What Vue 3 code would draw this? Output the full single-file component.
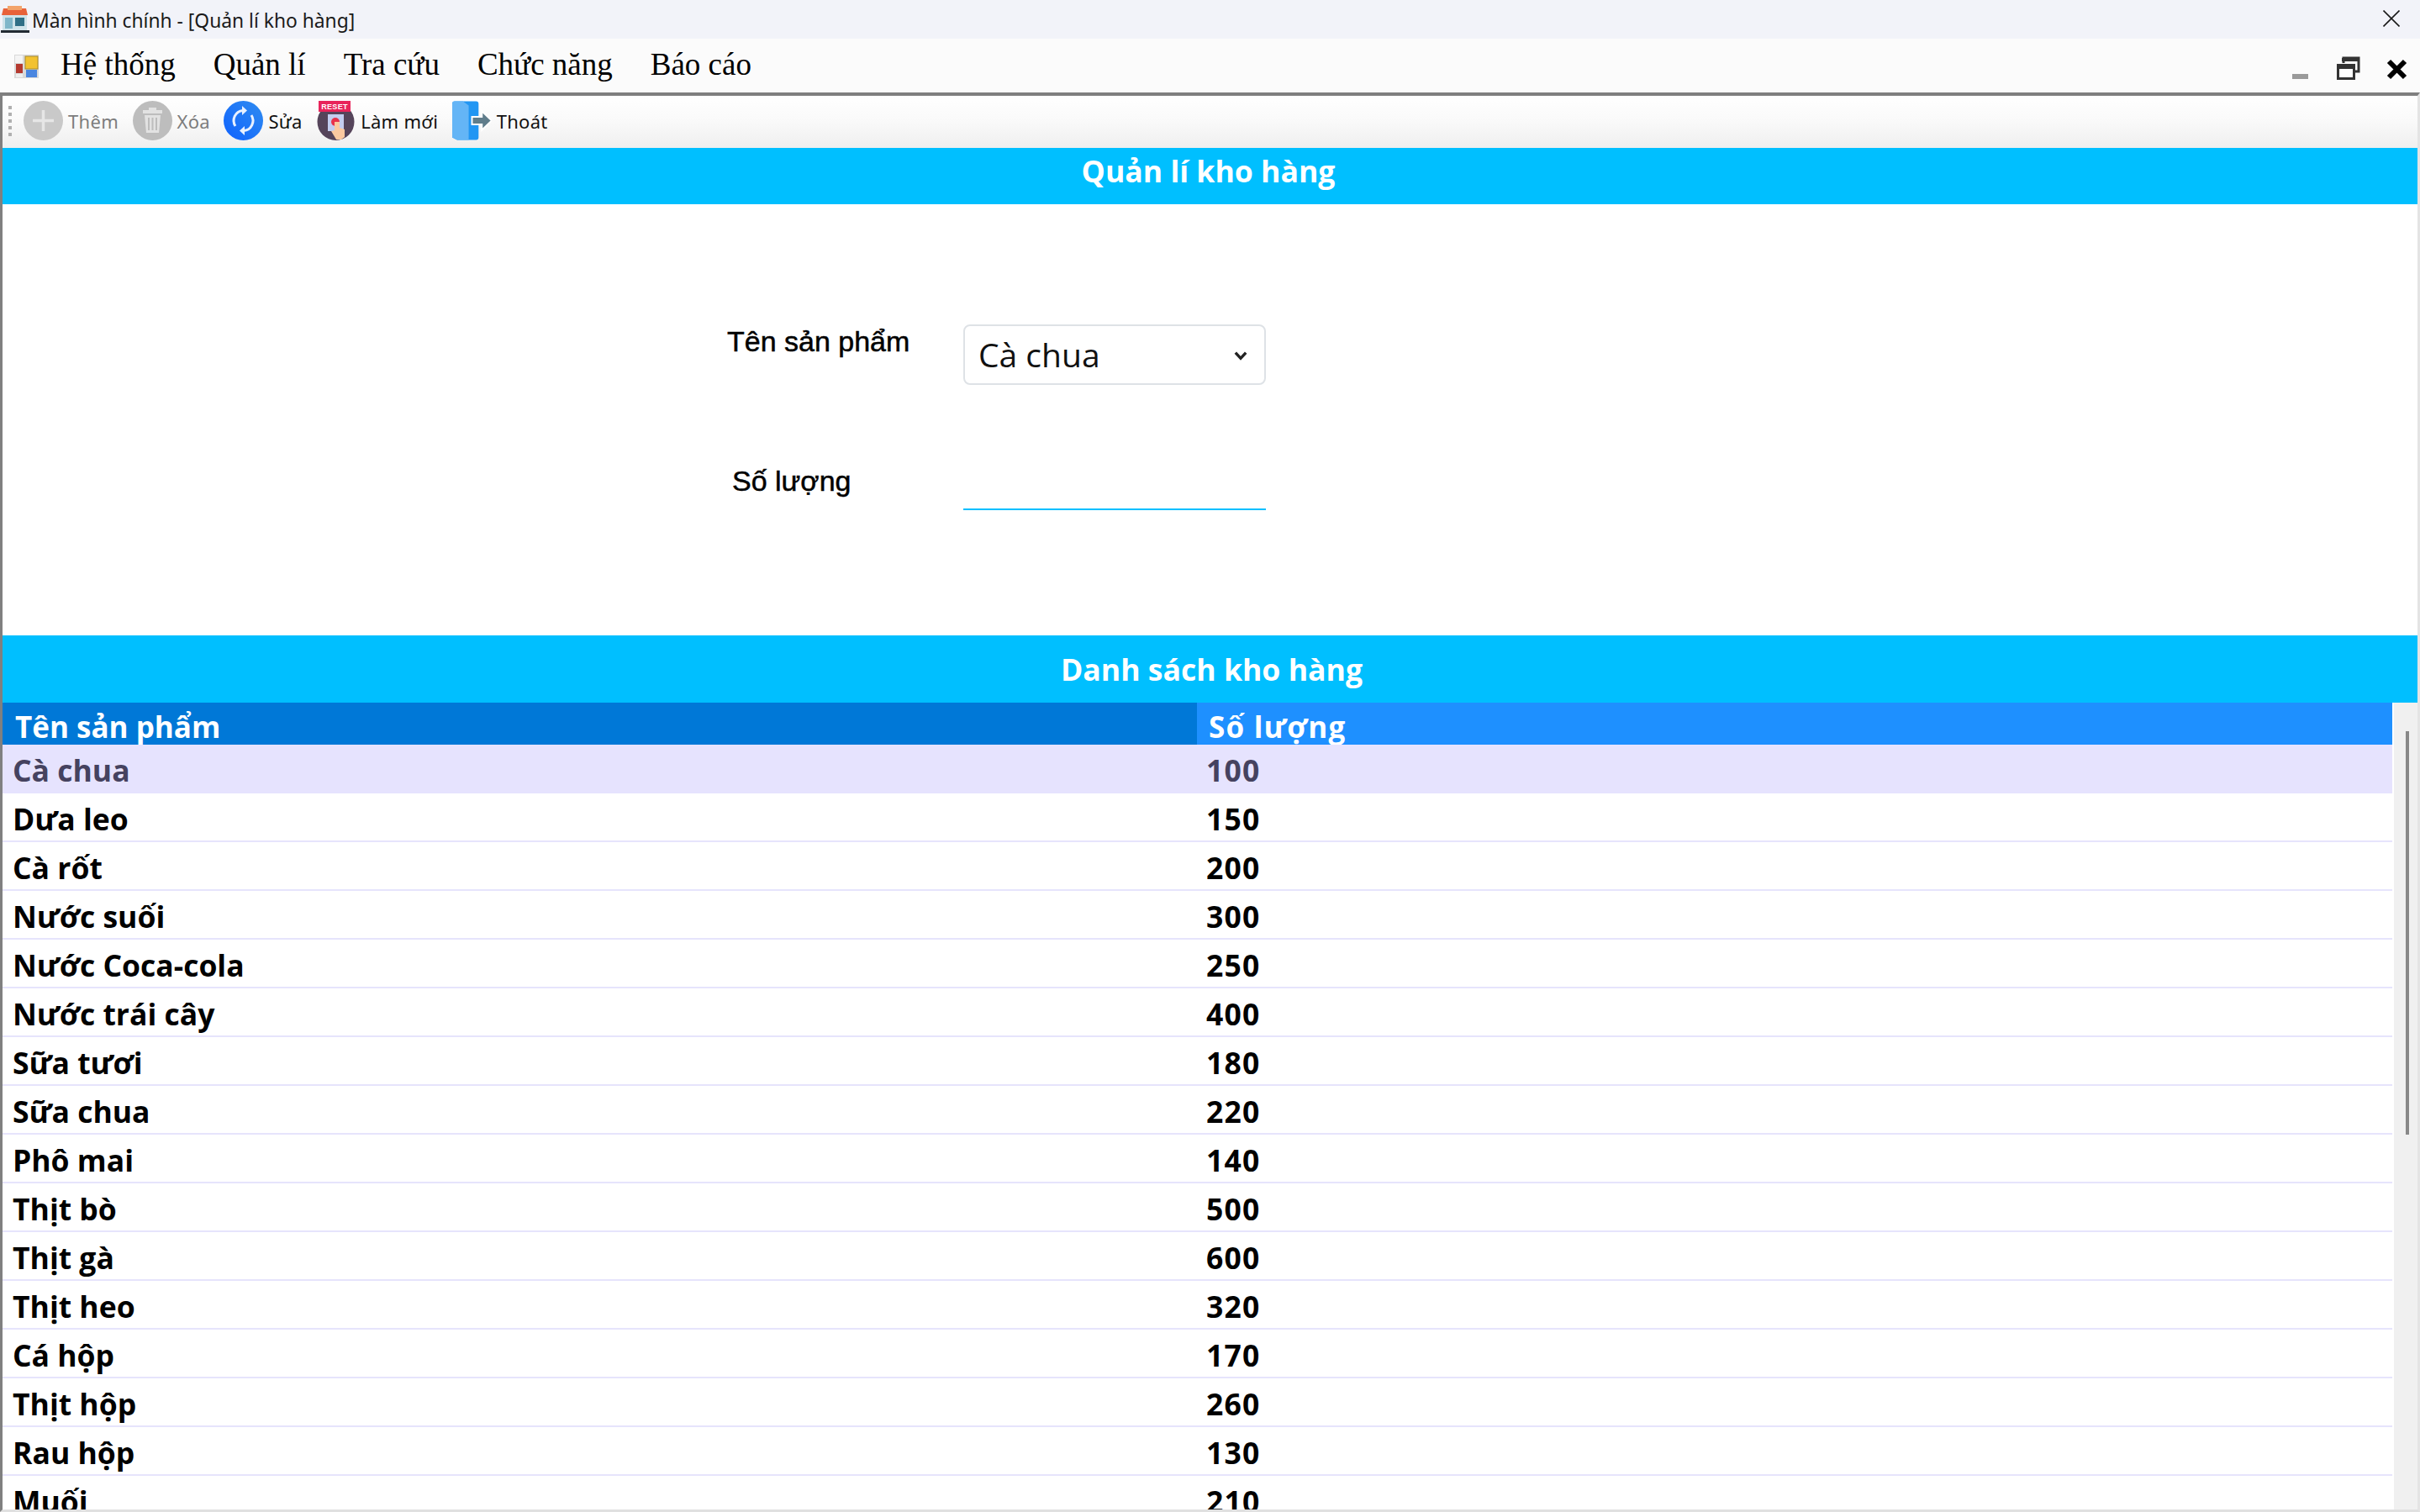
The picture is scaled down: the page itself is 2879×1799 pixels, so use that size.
<template>
  <div class="window">
    <div class="titlebar">
      <svg class="app-icon" viewBox="0 0 34 34">
        <rect x="2" y="12" width="29" height="18" fill="#cfe3ea" />
        <rect x="5" y="15" width="9" height="13" fill="#7fb6c9" />
        <rect x="17" y="15" width="11" height="10" fill="#2f6f86" />
        <path d="M3 4h27l2 8H1z" fill="#e8623a" />
        <rect x="8" y="1" width="17" height="5" fill="#f3a36b" />
        <rect x="0" y="30" width="34" height="3" fill="#222a33" />
      </svg>
      <span class="title-text">Màn hình chính - [Quản lí kho hàng]</span>
      <svg class="win-close" viewBox="0 0 20 20">
        <path d="M0.5 0.5L19.5 19.5M19.5 0.5L0.5 19.5" stroke="#1a1a1a" stroke-width="1.6" fill="none" />
      </svg>
    </div>

    <div class="menubar">
      <svg class="menu-icon" viewBox="0 0 29 28">
        <rect width="29" height="28" fill="#d9d9d9" />
        <rect x="1" y="1" width="9" height="9" fill="#f4f4f4" />
        <rect x="13" y="2" width="15" height="15" fill="#f2c230" stroke="#a88a2a" />
        <rect x="2" y="11" width="8" height="11" fill="#b5392f" />
        <rect x="14" y="18" width="13" height="9" fill="#4a86e0" />
        <rect x="2" y="23" width="8" height="4" fill="#eeeeee" />
      </svg>
      <span v-for="m in menus" :key="m" class="menu-item">{{ m }}</span>
      <div class="mdi-controls">
        <span class="mdi-min"></span>
        <svg class="mdi-restore" viewBox="0 0 28 28">
          <path d="M8 8V2h18v16h-6" stroke="#333" stroke-width="3" fill="none" />
          <rect x="6" y="2" width="20" height="4" fill="#333" />
          <rect x="1.5" y="10.5" width="19" height="16" stroke="#333" stroke-width="3" fill="#fff" />
          <rect x="1" y="10" width="20" height="5" fill="#333" />
        </svg>
        <svg class="mdi-close" viewBox="0 0 25 25">
          <path d="M3 3L22 22M22 3L3 22" stroke="#000" stroke-width="6" fill="none" />
        </svg>
      </div>
    </div>

    <div class="body">
      <div class="toolbar">
        <div class="grip"><i v-for="n in 5" :key="n"></i></div>
        <div class="tool disabled">
          <svg class="tool-icon" viewBox="0 0 47 47">
            <circle cx="23.5" cy="23.5" r="23.5" fill="#c9c9c9" />
            <path d="M23.5 11v25M11 23.5h25" stroke="#e6e6e6" stroke-width="3.5" />
          </svg>
          <span>Thêm</span>
        </div>
        <div class="tool disabled">
          <svg class="tool-icon" viewBox="0 0 47 47">
            <circle cx="23.5" cy="23.5" r="23.5" fill="#bdbdbd" />
            <rect x="12" y="11" width="23" height="4" fill="#e2e2e2" />
            <rect x="19" y="8" width="9" height="3" fill="#e2e2e2" />
            <path d="M14 17h19l-2 21H16z" fill="#e2e2e2" />
            <path d="M19 20v15M23.5 20v15M28 20v15" stroke="#bdbdbd" stroke-width="2" />
          </svg>
          <span>Xóa</span>
        </div>
        <div class="tool">
          <svg class="tool-icon" viewBox="0 0 47 47">
            <defs>
              <linearGradient id="blue" x1="0" y1="1" x2="1" y2="0">
                <stop offset="0" stop-color="#0f62fe" />
                <stop offset="1" stop-color="#2f8cf0" />
              </linearGradient>
            </defs>
            <circle cx="23.5" cy="23.5" r="23.5" fill="url(#blue)" />
            <path d="M14 30a12 12 0 0 1 9-18.5M33 17a12 12 0 0 1-9 18.5" stroke="#e8f1ff" stroke-width="3" fill="none" />
            <path d="M22 6l6 5.5-6 5.5zM25 30l-6 5.5 6 5.5z" fill="#e8f1ff" />
          </svg>
          <span>Sửa</span>
        </div>
        <div class="tool">
          <svg class="tool-icon" viewBox="0 0 47 47">
            <circle cx="23.5" cy="25" r="22" fill="#55445a" />
            <rect x="3" y="0" width="38" height="13" fill="#e8245a" />
            <text x="22" y="10" class="reset-text">RESET</text>
            <rect x="14" y="16" width="19" height="20" fill="#c3cdf0" />
            <circle cx="23" cy="25" r="5" fill="#e8324a" />
            <path d="M22 25h6v7l6 2v9l-4 3h-6l-6-10 4-1z" fill="#fbc9a0" />
          </svg>
          <span>Làm mới</span>
        </div>
        <div class="tool">
          <svg class="tool-icon" viewBox="0 0 48 47">
            <path d="M3 0h26a3 3 0 0 1 3 3v41a3 3 0 0 1-3 3H6l-6-3V3a3 3 0 0 1 3-3z" fill="#2196f3" />
            <path d="M0 3a3 3 0 0 1 3-3h10l7 5v42H6l-6-3z" fill="#64b5f6" />
            <path d="M24 19h12v-7l12 11.500-12 11.500v-7H24z" fill="#607d8b" stroke="#fff" stroke-width="2" />
          </svg>
          <span>Thoát</span>
        </div>
      </div>

      <div class="band band-top">Quản lí kho hàng</div>

      <div class="form">
        <div class="form-row first">
          <label class="form-label">Tên sản phẩm</label>
          <div class="select-wrap">
            <select class="select" v-model="product">
              <option v-for="r in rows" :key="r.name" :value="r.name">{{ r.name }}</option>
            </select>
            <svg class="chevron" viewBox="0 0 16 16">
              <path d="M2.500 5l5.500 6 5.500-6" stroke="#222" stroke-width="3" fill="none" />
            </svg>
          </div>
        </div>
        <div class="form-row second">
          <label class="form-label indent">Số lượng</label>
          <input class="qty" type="text" />
        </div>
      </div>

      <div class="band band-list">Danh sách kho hàng</div>

      <div class="grid-area">
        <div class="grid">
          <div class="grid-head">
            <div class="head-name">Tên sản phẩm</div>
            <div class="head-qty">Số lượng</div>
          </div>
          <div v-for="(r, i) in rows" :key="r.name" class="grid-row" :class="{ selected: i === 0 }">
            <div class="cell-name">{{ r.name }}</div>
            <div class="cell-qty">{{ r.qty }}</div>
          </div>
        </div>
        <div class="scrollbar"><div class="thumb"></div></div>
      </div>
    </div>
  </div>
</template>

<script setup>
import { ref } from 'vue'

const menus = ['Hệ thống', 'Quản lí', 'Tra cứu', 'Chức năng', 'Báo cáo']

const rows = [
  { name: 'Cà chua', qty: 100 },
  { name: 'Dưa leo', qty: 150 },
  { name: 'Cà rốt', qty: 200 },
  { name: 'Nước suối', qty: 300 },
  { name: 'Nước Coca-cola', qty: 250 },
  { name: 'Nước trái cây', qty: 400 },
  { name: 'Sữa tươi', qty: 180 },
  { name: 'Sữa chua', qty: 220 },
  { name: 'Phô mai', qty: 140 },
  { name: 'Thịt bò', qty: 500 },
  { name: 'Thịt gà', qty: 600 },
  { name: 'Thịt heo', qty: 320 },
  { name: 'Cá hộp', qty: 170 },
  { name: 'Thịt hộp', qty: 260 },
  { name: 'Rau hộp', qty: 130 },
  { name: 'Muối', qty: 210 }
]

const product = ref('Cà chua')
</script>

<style scoped>
.window {
  width: 2879px;
  height: 1799px;
  display: flex;
  flex-direction: column;
  overflow: hidden;
  background: #fff;
  font-family: "Noto Sans", sans-serif;
  color: #000;
}

.titlebar {
  height: 46px;
  flex: none;
  display: flex;
  align-items: center;
  background: #f2f3f9;
  padding-left: 1px;
}

.app-icon {
  width: 34px;
  height: 34px;
}

.title-text {
  margin-left: 3px;
  margin-top: 2px;
  font-size: 22.8px;
  color: #1a1a1a;
}

.win-close {
  width: 20px;
  height: 20px;
  margin-left: auto;
  margin-right: 24px;
  margin-top: -2px;
}

.menubar {
  height: 64px;
  flex: none;
  display: flex;
  align-items: center;
  background: #fbfbfb;
  padding-left: 17px;
  box-sizing: border-box;
}

.menu-icon {
  width: 29px;
  height: 28px;
  margin-right: 26px;
  margin-top: 2px;
}

.menu-item {
  font-family: "Liberation Serif", serif;
  font-size: 37px;
  margin-right: 45px;
  margin-top: -3px;
  color: #000;
}

.mdi-controls {
  margin-left: auto;
  display: flex;
  align-items: flex-start;
  height: 28px;
  margin-top: 6px;
  padding-right: 15px;
}

.mdi-min {
  width: 19px;
  height: 6px;
  background: #9a9a9a;
  margin-top: 21px;
  margin-right: 34px;
}

.mdi-restore {
  width: 28px;
  height: 28px;
  margin-right: 31px;
}

.mdi-close {
  width: 25px;
  height: 25px;
  margin-top: 3px;
}

.body {
  flex: 1;
  min-height: 0;
  display: flex;
  flex-direction: column;
  border-top: 4px solid #7f7f7f;
  border-left: 3px solid #808080;
  border-right: 3px solid #e4e4e4;
  border-bottom: 3px solid #e0e0e0;
}

.toolbar {
  height: 62px;
  flex: none;
  display: flex;
  align-items: center;
  gap: 16.5px;
  background: linear-gradient(#ffffff, #fafafa 45%, #efefef);
  padding: 0 0 3px 7px;
  box-sizing: border-box;
}

.grip {
  width: 4px;
  display: flex;
  flex-direction: column;
  gap: 4px;
  margin-right: -2.5px;
}

.grip i {
  width: 4px;
  height: 4px;
  background: #b0b0b0;
}

.tool {
  display: flex;
  align-items: center;
  gap: 6px;
  font-size: 22px;
  letter-spacing: 0.3px;
  color: #111;
}

.tool.disabled {
  color: #7d7d7d;
}

.tool-icon {
  width: 47px;
  height: 47px;
  flex: none;
}

.reset-text {
  font-family: "Liberation Sans", sans-serif;
  font-size: 9px;
  font-weight: 700;
  fill: #fff;
  text-anchor: middle;
}

.band {
  flex: none;
  display: flex;
  justify-content: center;
  align-items: center;
  background: #00bfff;
  color: #fff;
  font-weight: 700;
  font-family: "Open Sans", sans-serif;
  font-size: 35.6px;
  box-sizing: border-box;
}

.band-top {
  height: 67px;
  padding-bottom: 14px;
  padding-right: 4px;
}

.band-list {
  height: 80px;
  padding-left: 4px;
}

.form {
  height: 513px;
  flex: none;
  box-sizing: border-box;
  padding-left: 862px;
}

.form-row {
  display: grid;
  grid-template-columns: 281px 360px;
}

.form-row.first {
  padding-top: 143px;
}

.form-row.second {
  margin-top: 88px;
  align-items: end;
}

.form-label {
  font-family: "Liberation Sans", sans-serif;
  font-size: 34px;
  -webkit-text-stroke: 0.5px #000;
  color: #000;
  line-height: 40px;
}

.form-label.indent {
  margin-left: 6px;
  margin-bottom: 15px;
}

.select-wrap {
  position: relative;
  width: 360px;
  height: 72px;
}

.select {
  appearance: none;
  width: 100%;
  height: 100%;
  box-sizing: border-box;
  border: 2px solid #dee2e6;
  border-radius: 8px;
  background: #fff;
  padding: 0 0 2px 16px;
  font-family: "Open Sans", sans-serif;
  font-size: 39px;
  color: #111;
  outline: none;
}

.chevron {
  position: absolute;
  right: 21px;
  top: 28px;
  width: 18px;
  height: 18px;
}

.qty {
  width: 360px;
  height: 61px;
  box-sizing: border-box;
  border: none;
  border-bottom: 2px solid #00bfff;
  outline: none;
  background: #fff;
}

.grid-area {
  flex: 1;
  min-height: 0;
  display: flex;
  overflow: hidden;
}

.grid {
  width: 2843px;
  flex: none;
  font-family: "Open Sans", sans-serif;
  font-weight: 700;
  font-size: 35.5px;
}

.grid-head {
  display: flex;
  height: 50px;
  color: #fff;
  font-size: 35px;
  line-height: 42px;
  overflow: hidden;
}

.head-name {
  width: 1421px;
  flex: none;
  box-sizing: border-box;
  padding: 8px 0 0 15px;
  background: #0078d7;
}

.head-qty {
  flex: 1;
  padding: 8px 0 0 14px;
  letter-spacing: 1.2px;
  background: #1e90ff;
}

.grid-row {
  display: flex;
  height: 58px;
  box-sizing: border-box;
  border-bottom: 2px solid #e6e4fc;
  line-height: 60px;
  overflow: hidden;
  background: #fff;
}

.grid-row.selected {
  background: #e6e3fe;
  border-bottom-color: #e6e3fe;
  color: #45425f;
}

.cell-name {
  width: 1421px;
  flex: none;
  box-sizing: border-box;
  padding-left: 12px;
}

.cell-qty {
  padding-left: 11px;
  letter-spacing: 1.2px;
}

.scrollbar {
  width: 28px;
  margin-left: 2px;
  flex: none;
  background: #f0f0f0;
  position: relative;
}

.thumb {
  position: absolute;
  left: 14px;
  top: 34px;
  width: 4px;
  height: 480px;
  background: #888;
}
</style>

<style>
html,
body {
  margin: 0;
  overflow: hidden;
}
</style>
